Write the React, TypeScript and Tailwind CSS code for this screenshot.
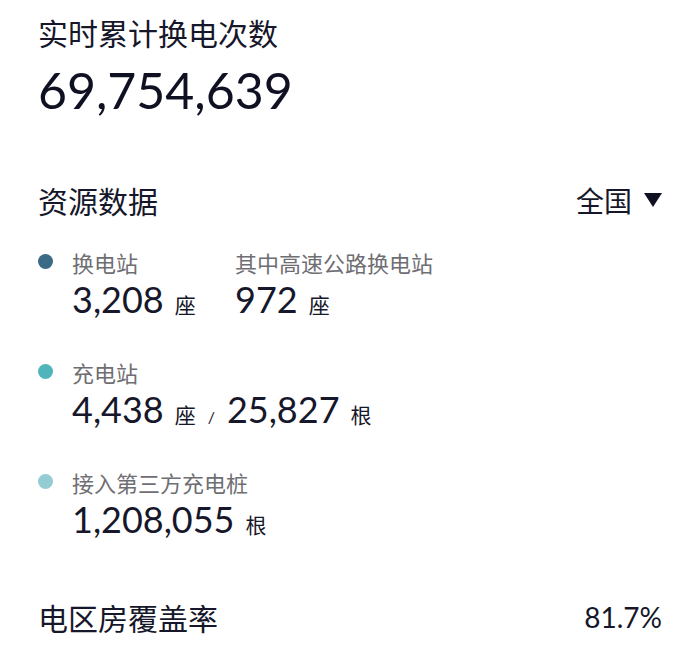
const cjk = { fontFamily: '"Noto Sans CJK SC", "Noto Sans", sans-serif' };
const num = { fontFamily: 'Lato, "Noto Sans CJK SC", sans-serif' };

function Unit({ children }: { children: React.ReactNode }) {
  return (
    <span className="ml-[11px] text-[21px] text-[#16172a]" style={cjk}>
      {children}
    </span>
  );
}

function Stat({ value, unit }: { value: string; unit: string }) {
  return (
    <div className="flex items-baseline">
      <span className="text-[36px] leading-[44px] text-[#16172a]" style={num}>
        {value}
      </span>
      <Unit>{unit}</Unit>
    </div>
  );
}

function Label({ children }: { children: React.ReactNode }) {
  return (
    <div className="text-[22px] leading-[30px] text-[#6e6e73]" style={cjk}>
      {children}
    </div>
  );
}

function Dot({ color }: { color: string }) {
  return <span className={`mt-[7px] h-[15px] w-[15px] shrink-0 rounded-full ${color}`} />;
}

export default function App() {
  return (
    <div className="min-h-[669px] w-[700px] bg-white px-[38px] pt-[12px] text-[#16172a]">
      <div className="text-[30px] leading-[40px]" style={cjk}>
        实时累计换电次数
      </div>
      <div className="mt-[10px] text-[50px] leading-[56px] text-[#0f1123]" style={num}>
        69,754,639
      </div>

      <div className="mt-[62px] flex items-center justify-between">
        <div className="text-[30px] leading-[40px]" style={cjk}>
          资源数据
        </div>
        <div className="flex items-center gap-3">
          <span className="text-[28px] leading-[40px]" style={cjk}>
            全国
          </span>
          <svg width="18" height="14" viewBox="0 0 18 14">
            <path d="M0 0 H18 L9 14 Z" fill="#0f1123" />
          </svg>
        </div>
      </div>

      <div className="mt-[27px] flex flex-col gap-[36px]">
        <div className="flex gap-[19px]">
          <Dot color="bg-[#3b6a87]" />
          <div className="flex">
            <div className="w-[163px]">
              <Label>换电站</Label>
              <Stat value="3,208" unit="座" />
            </div>
            <div>
              <Label>其中高速公路换电站</Label>
              <Stat value="972" unit="座" />
            </div>
          </div>
        </div>

        <div className="flex gap-[19px]">
          <Dot color="bg-[#4fb5bb]" />
          <div>
            <Label>充电站</Label>
            <div className="flex items-baseline">
              <Stat value="4,438" unit="座" />
              <span className="mx-[12px] text-[16px] text-[#16172a]" style={num}>
                /
              </span>
              <Stat value="25,827" unit="根" />
            </div>
          </div>
        </div>

        <div className="flex gap-[19px]">
          <Dot color="bg-[#93cdd3]" />
          <div>
            <Label>接入第三方充电桩</Label>
            <Stat value="1,208,055" unit="根" />
          </div>
        </div>
      </div>

      <div className="mt-[56px] flex items-center justify-between">
        <div className="text-[30px] leading-[40px]" style={cjk}>
          电区房覆盖率
        </div>
        <div className="text-[28px] leading-[40px]" style={num}>
          81.7%
        </div>
      </div>
    </div>
  );
}
